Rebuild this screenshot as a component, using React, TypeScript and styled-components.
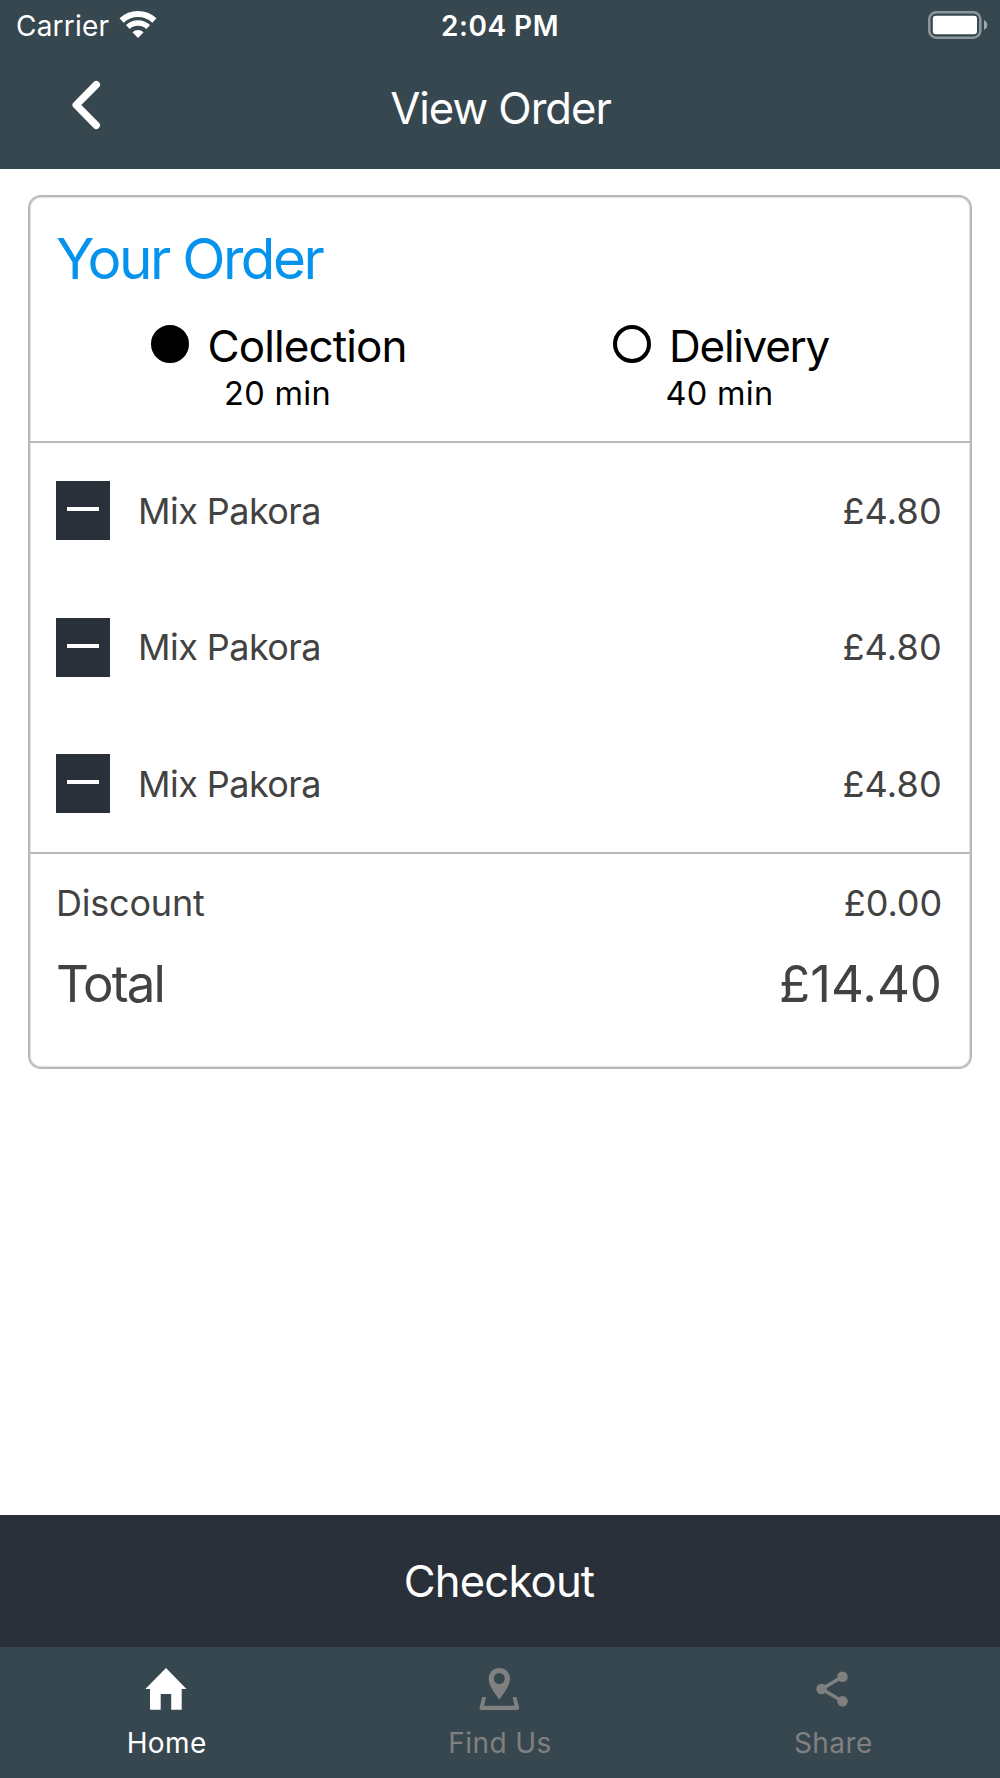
import React, { useState } from "react";
import styled, { createGlobalStyle } from "styled-components";

const GlobalStyle = createGlobalStyle`
  * { box-sizing: border-box; }
  html, body { margin: 0; padding: 0; background: #ffffff; }
  body { font-family: Inter, "Liberation Sans", sans-serif; font-weight: 400; }
  button { font: inherit; color: inherit; border: 0; padding: 0; background: none; }
  h1, h2 { margin: 0; font-weight: 400; }
`;

const Screen = styled.div`
  display: flex;
  flex-direction: column;
  width: 1000px;
  height: 1778px;
  background: #ffffff;
  overflow: hidden;
`;

const Header = styled.header`
  flex: none;
  height: 169px;
  background: #37474f;
  color: #ffffff;
`;

const StatusBar = styled.div`
  display: grid;
  grid-template-columns: 1fr auto 1fr;
  align-items: center;
  height: 51px;
  padding: 1px 12px 0;
  font-size: 28px;
  line-height: 51px;
`;

const Carrier = styled.div`
  display: flex;
  align-items: center;
  gap: 10px;
  padding-left: 4px;
  letter-spacing: 0.2px;
  svg { margin-top: -6px; }
`;

const Time = styled.div`
  font-weight: 600;
  letter-spacing: 0.5px;
`;

const BatterySlot = styled.div`
  display: flex;
  justify-content: flex-end;
  svg { margin-top: -4px; }
`;

const NavBar = styled.div`
  display: grid;
  grid-template-columns: 1fr auto 1fr;
  height: 115px;
  padding-left: 70px;
  align-items: center;
  padding-right: 69px;
`;

const BackButton = styled.button`
  display: flex;
  justify-self: start;
  margin-top: -8px;
`;

const Title = styled.h1`
  font-size: 43.6px;
  line-height: 60px;
  letter-spacing: -1px;
`;

const Main = styled.main`
  flex: 1;
  padding: 26px 28px 0;
`;

const Card = styled.section`
  height: 874px;
  border: 2px solid #b9b9b9;
  border-radius: 13px;
  box-shadow: inset 0 0 0 1px #e2e2e2;
`;

const OrderHead = styled.div`
  height: 244px;
  padding: 32px 28px 0 26px;
`;

const OrderTitle = styled.h2`
  font-size: 56.6px;
  line-height: 60px;
  color: #0593ed;
  letter-spacing: -2.5px;
`;

const Options = styled.div`
  display: grid;
  grid-template-columns: 1fr 1fr;
  margin-top: 31px;
  padding-left: 2px;
  color: #000000;
`;

const Option = styled.button`
  display: flex;
  flex-direction: column;
  align-items: center;
`;

const OptionLabel = styled.span<{ $spacing: number }>`
  display: flex;
  align-items: center;
  gap: 18px;
  font-size: 44px;
  line-height: 52px;
  letter-spacing: ${(p) => p.$spacing}px;
`;

const Radio = styled.span<{ $on: boolean }>`
  width: 38px;
  height: 38px;
  margin-top: -5px;
  border: 4px solid #000000;
  border-radius: 50%;
  background: ${(p) => (p.$on ? "#000000" : "transparent")};
`;

const OptionTime = styled.span`
  padding-right: 3px;
  font-size: 32.5px;
  line-height: 44px;
  letter-spacing: 0.3px;
`;

const Items = styled.ul`
  list-style: none;
  margin: 0;
  padding: 0 28px 0 26px;
  border-top: 2px solid #b9b9b9;
  border-bottom: 2px solid #b9b9b9;
  color: #424242;
`;

const Item = styled.li`
  display: flex;
  align-items: center;
  height: 136.33px;
  padding-bottom: 0.5px;
  font-size: 36px;
  line-height: 44px;
`;

const RemoveButton = styled.button`
  display: flex;
  align-items: center;
  justify-content: center;
  width: 54px;
  height: 59px;
  padding-bottom: 3px;
  margin-right: 28px;
  background: #2a303a;
`;

const Minus = styled.span`
  width: 32px;
  height: 4px;
  background: #ffffff;
`;

const ItemName = styled.span`
  flex: 1;
  letter-spacing: -0.55px;
`;

const Amount = styled.span<{ $spacing?: number }>`
  letter-spacing: ${(p) => p.$spacing ?? 0}px;
`;

const Summary = styled.div`
  padding: 27px 28px 0 26px;
  color: #424242;
`;

const SummaryRow = styled.div<{ $large?: boolean }>`
  display: flex;
  justify-content: space-between;
  font-size: ${(p) => (p.$large ? 51 : 36)}px;
  line-height: ${(p) => (p.$large ? 60 : 44)}px;
  margin-top: ${(p) => (p.$large ? 29 : 0)}px;
`;

const SummaryLabel = styled.span<{ $large?: boolean }>`
  letter-spacing: ${(p) => (p.$large ? -1.9 : -0.2)}px;
`;

const Checkout = styled.button`
  flex: none;
  height: 132px;
  padding: 2px 2px 0 0;
  background: #2a303a;
  color: #ffffff;
  font-size: 43.6px;
  line-height: 60px;
  letter-spacing: -0.8px;
`;

const TabBar = styled.nav`
  flex: none;
  display: grid;
  grid-template-columns: repeat(3, 1fr);
  height: 131px;
  background: #37474f;
`;

const Tab = styled.button<{ $active?: boolean }>`
  display: flex;
  flex-direction: column;
  align-items: center;
  padding-top: 20px;
  gap: 15px;
  color: ${(p) => (p.$active ? "#ffffff" : "#808080")};
  font-size: 28px;
  line-height: 34px;
  letter-spacing: 0.4px;
`;

const WifiIcon = () => (
  <svg width="38" height="28" viewBox="0 0 38 28" fill="none" stroke="#fff">
    <path d="M2.6 10.5A24 24 0 0 1 35.4 10.5" strokeWidth="6" />
    <path d="M8.8 17A15 15 0 0 1 29.2 17" strokeWidth="5.4" />
    <path d="M19 28L13.5 22.2A8 8 0 0 1 24.5 22.2Z" fill="#fff" stroke="none" />
  </svg>
);

const BatteryIcon = () => (
  <svg width="60" height="28" viewBox="0 0 60 28">
    <rect x="1.3" y="1.3" width="51" height="25.4" rx="7" fill="none" stroke="#8b959a" strokeWidth="2.6" />
    <rect x="4.8" y="4.8" width="44.2" height="18.4" rx="3" fill="#fff" />
    <path d="M56 9Q59.3 11 59.3 14T56 19Z" fill="#a0a8ac" />
  </svg>
);

const BackIcon = () => (
  <svg width="34" height="50" viewBox="0 0 34 50" fill="none" stroke="#fff" strokeWidth="7.4" strokeLinecap="round" strokeLinejoin="round">
    <path d="M26.3 4.7L6.2 25L26.3 45.3" />
  </svg>
);

const HomeIcon = () => (
  <svg width="44" height="44" viewBox="0 0 44 44" fill="currentColor">
    <path d="M21 1L41.5 22H36.7V42.7H26.2V27H15.7V42.7H5V22H.3Z" />
  </svg>
);

const PinIcon = () => (
  <svg width="44" height="44" viewBox="0 0 44 44" fill="currentColor">
    <path fillRule="evenodd" d="M21.3 1C15.2 1 10.7 5.8 10.7 11.6C10.7 19 16.6 26.2 21.3 32.4C26 26.2 31.9 19 31.9 11.6C31.9 5.8 27.4 1 21.3 1ZM21.3 6A5.5 5.5 0 1 1 21.3 17A5.5 5.5 0 1 1 21.3 6Z" />
    <path d="M4.4 30H8L6 38.8H36.6L34.6 30H38.2L41.2 40.5Q41.4 43 39 43H3.6Q1.2 43 1.5 40.5Z" />
  </svg>
);

const ShareIcon = () => (
  <svg width="44" height="44" viewBox="0 0 44 44" fill="currentColor" stroke="currentColor">
    <path d="M31.5 9.8L10.6 22L31.5 34.2" fill="none" strokeWidth="3.4" />
    <g stroke="none">
      <circle cx="31.5" cy="9.8" r="5.3" />
      <circle cx="10.6" cy="22" r="5.3" />
      <circle cx="31.5" cy="34.2" r="5.3" />
    </g>
  </svg>
);

const methods = [
  { name: "Collection", time: "20 min", spacing: -0.9 },
  { name: "Delivery", time: "40 min", spacing: -1.3 },
];

const items = [
  { id: 1, name: "Mix Pakora", price: "£4.80" },
  { id: 2, name: "Mix Pakora", price: "£4.80" },
  { id: 3, name: "Mix Pakora", price: "£4.80" },
];

export default function App() {
  const [method, setMethod] = useState("Collection");
  return (
    <>
      <GlobalStyle />
      <Screen>
        <Header>
          <StatusBar>
            <Carrier>
              Carrier
              <WifiIcon />
            </Carrier>
            <Time>2:04 PM</Time>
            <BatterySlot>
              <BatteryIcon />
            </BatterySlot>
          </StatusBar>
          <NavBar>
            <BackButton aria-label="Back">
              <BackIcon />
            </BackButton>
            <Title>View Order</Title>
          </NavBar>
        </Header>
        <Main>
          <Card>
            <OrderHead>
              <OrderTitle>Your Order</OrderTitle>
              <Options>
                {methods.map((m) => (
                  <Option key={m.name} onClick={() => setMethod(m.name)}>
                    <OptionLabel $spacing={m.spacing}>
                      <Radio $on={m.name === method} />
                      {m.name}
                    </OptionLabel>
                    <OptionTime>{m.time}</OptionTime>
                  </Option>
                ))}
              </Options>
            </OrderHead>
            <Items>
              {items.map((item) => (
                <Item key={item.id}>
                  <RemoveButton aria-label="Remove">
                    <Minus />
                  </RemoveButton>
                  <ItemName>{item.name}</ItemName>
                  <Amount $spacing={0.2}>{item.price}</Amount>
                </Item>
              ))}
            </Items>
            <Summary>
              <SummaryRow>
                <SummaryLabel>Discount</SummaryLabel>
                <Amount $spacing={-0.1}>£0.00</Amount>
              </SummaryRow>
              <SummaryRow $large>
                <SummaryLabel $large>Total</SummaryLabel>
                <Amount>£14.40</Amount>
              </SummaryRow>
            </Summary>
          </Card>
        </Main>
        <Checkout>Checkout</Checkout>
        <TabBar>
          <Tab $active>
            <HomeIcon />
            Home
          </Tab>
          <Tab>
            <PinIcon />
            Find Us
          </Tab>
          <Tab>
            <ShareIcon />
            Share
          </Tab>
        </TabBar>
      </Screen>
    </>
  );
}
